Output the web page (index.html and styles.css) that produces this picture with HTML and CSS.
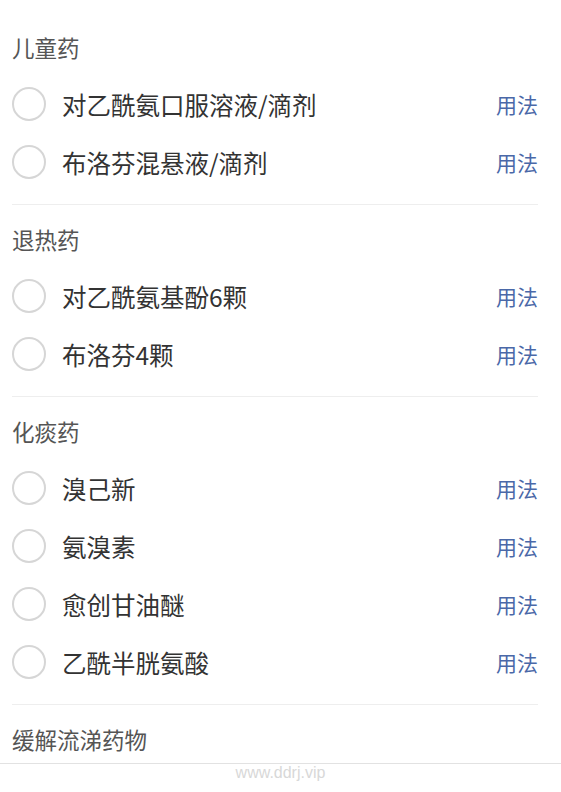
FILE: index.html
```html
<!DOCTYPE html>
<html lang="zh-CN">
<head>
    <meta charset="UTF-8">
    <title>药品清单</title>
    <link rel="stylesheet" href="styles.css">
</head>
<body>
<div id="list">
    <div class="group">
        <h3 class="title">儿童药</h3>
        <ul>
            <li><span class="check"></span><span class="name">对乙酰氨口服溶液/滴剂</span><a class="usage">用法</a></li>
            <li><span class="check"></span><span class="name">布洛芬混悬液/滴剂</span><a class="usage">用法</a></li>
        </ul>
    </div>
    <div class="group">
        <h3 class="title">退热药</h3>
        <ul>
            <li><span class="check"></span><span class="name">对乙酰氨基酚6颗</span><a class="usage">用法</a></li>
            <li><span class="check"></span><span class="name">布洛芬4颗</span><a class="usage">用法</a></li>
        </ul>
    </div>
    <div class="group">
        <h3 class="title">化痰药</h3>
        <ul>
            <li><span class="check"></span><span class="name">溴己新</span><a class="usage">用法</a></li>
            <li><span class="check"></span><span class="name">氨溴素</span><a class="usage">用法</a></li>
            <li><span class="check"></span><span class="name">愈创甘油醚</span><a class="usage">用法</a></li>
            <li><span class="check"></span><span class="name">乙酰半胱氨酸</span><a class="usage">用法</a></li>
        </ul>
    </div>
    <div class="group last">
        <h3 class="title">缓解流涕药物</h3>
    </div>
</div>
<div id="footer">www.ddrj.vip</div>
</body>
</html>
```

FILE: styles.css
```css
*{
    margin: 0;
    padding: 0;
}
body{
    background-color: #fff;
    font-family: "Noto Sans CJK SC", "Noto Sans", sans-serif;
    width: 561px;
    height: 792px;
    overflow: hidden;
}
#list{
    padding: 13px 23px 0 12px;
}
.group{
    padding-bottom: 13px;
    border-bottom: 1px solid #eeeeee;
}
.group.last{
    border-bottom: none;
    padding-bottom: 0;
}
.title{
    font-size: 22.5px;
    font-weight: normal;
    color: #555;
    line-height: 30px;
    padding: 19px 0 13px;
}
.last .title{
    padding-bottom: 9px;
}
.group ul{
    list-style: none;
}
.group li{
    display: flex;
    align-items: center;
    height: 58px;
}
.check{
    width: 30px;
    height: 30px;
    border: 2px solid #d6d6d6;
    border-radius: 50%;
    margin-right: 16px;
    flex-shrink: 0;
}
.name{
    flex: 1;
    font-size: 24.5px;
    color: #333;
}
.usage{
    font-size: 21px;
    color: #4a68a8;
    cursor: pointer;
}
#footer{
    border-top: 1px solid #e2e2e2;
    text-align: center;
    font-family: "Liberation Sans", sans-serif;
    font-size: 16px;
    color: #d8d8d8;
    line-height: 16px;
    padding-top: 1px;
}
```
